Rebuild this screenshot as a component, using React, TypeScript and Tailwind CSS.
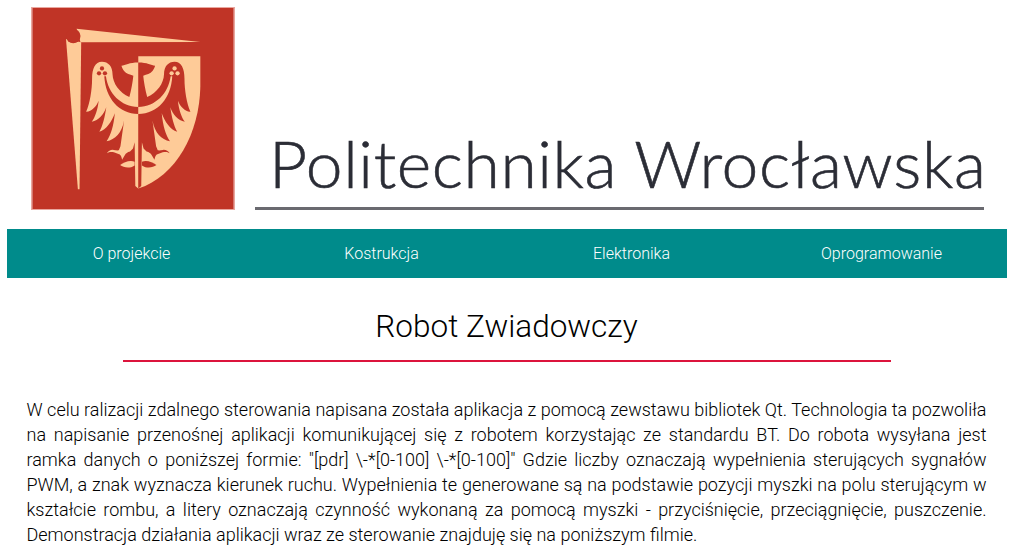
const PEACH = "#fecb98";
const RED = "#c03426";

// left half of the eagle, the right half is the same shape mirrored in the other colour
const silhouette =
  "M245 184C264 184 277 198 277 222C278 250 298 278 328 291C334 268 338 246 340 226C330 223 318 220 312 212C308 207 306 202 304 196C316 194 328 186 355 186L355 568L346 560L344 428L339 447L330 456C322 458 317 462 315 466L306 481C305 474 303 469 299 465L281 458C272 456 266 457 260 461C264 454 272 450 280 451C286 452 292 453 296 452L301 440L312 362C305 400 285 420 259 425C272 405 280 380 284 340C275 365 258 390 237 396C247 380 254 350 258 322C250 345 235 362 214 366C224 352 232 330 235 302C228 320 212 336 197 335C208 310 215 270 215 235C215 205 224 184 245 184Z";
const leaf = "M344 487C330 481 312 488 300 497C310 503 326 510 344 498Z";
const crescent = "M257 228C264 280 302 320 355 321L355 342C296 342 256 295 252 228Z";

const PolwrLogo = () => (
  <svg viewBox="34 21 610 609" className="h-[203px] w-[204px] shrink-0 border border-[#e9a79f]">
    <rect x="34" y="21" width="610" height="609" fill={RED} />
    {/* banner */}
    <path d="M136 115L182 125L177 570L172 570Z" fill={PEACH} />
    <path d="M168 84L543 124L180 125Z" fill={PEACH} />
    <circle cx="158" cy="106" r="22" fill={RED} />
    {/* shield */}
    <path d="M355 167L543 167L543 260C540 400 470 530 355 568Z" fill={PEACH} />
    <path d={silhouette} fill={PEACH} />
    <path d={leaf} fill={PEACH} />
    <path d={crescent} fill={RED} />
    <circle cx="245" cy="204" r="6.5" fill={RED} />
    <circle cx="236" cy="219" r="6.5" fill={RED} />
    <circle cx="254" cy="219" r="6.5" fill={RED} />
    <g transform="translate(710 0) scale(-1 1)">
      <path d={silhouette} fill={RED} />
      <path d={leaf} fill={RED} />
      <path d={crescent} fill={PEACH} />
      <circle cx="245" cy="204" r="6.5" fill={PEACH} />
      <circle cx="236" cy="219" r="6.5" fill={PEACH} />
      <circle cx="254" cy="219" r="6.5" fill={PEACH} />
    </g>
  </svg>
);

const navItems = ["O projekcie", "Kostrukcja", "Elektronika", "Oprogramowanie"];

export default function App() {
  return (
    <div className="ml-[6.5px] h-[554px] w-[1000px] overflow-hidden bg-white font-['Roboto',sans-serif]">
      {/* Header */}
      <header className="flex h-[229px] pl-[24.5px] pt-[7px]">
        <PolwrLogo />
        <div className="ml-[20px] flex h-[203px] w-[729px] flex-col justify-end">
          <div className="pl-[14px] font-['Lato',sans-serif] text-[66px] leading-[70px] font-light tracking-[0.6px] whitespace-nowrap text-[#2b2d36] [-webkit-text-stroke:0.6px_#2b2d36]">
            Politechnika Wrocławska
          </div>
          <div className="mt-[9px] h-[3px] bg-[#6a6a70]" />
        </div>
      </header>

      {/* Nav */}
      <nav className="grid h-[49px] grid-cols-4 bg-[#008b8b]">
        {navItems.map((item) => (
          <a key={item} className="flex items-center justify-center text-base font-light text-white">
            {item}
          </a>
        ))}
      </nav>

      {/* Content */}
      <main className="px-[20px]">
        <h1 className="pt-[28px] text-center text-[31.5px] leading-[42px] font-light text-black">Robot Zwiadowczy</h1>
        <div className="mx-auto mt-[12px] h-[2px] w-[768px] bg-[#dc143c]" />
        <p className="mt-[35px] text-justify text-[18px] leading-[25px] font-light text-black">
          W celu ralizacji zdalnego sterowania napisana została aplikacja z pomocą zewstawu bibliotek Qt. Technologia ta
          pozwoliła na napisanie przenośnej aplikacji komunikującej się z robotem korzystając ze standardu BT. Do robota
          wysyłana jest ramka danych o poniższej formie: "[pdr] \-*[0-100] \-*[0-100]" Gdzie liczby oznaczają wypełnienia
          sterujących sygnałów PWM, a znak wyznacza kierunek ruchu. Wypełnienia te generowane są na podstawie pozycji
          myszki na polu sterującym w kształcie rombu, a litery oznaczają czynność wykonaną za pomocą myszki -
          przyciśnięcie, przeciągnięcie, puszczenie. Demonstracja działania aplikacji wraz ze sterowanie znajduję się na
          poniższym filmie.
        </p>
      </main>
    </div>
  );
}
